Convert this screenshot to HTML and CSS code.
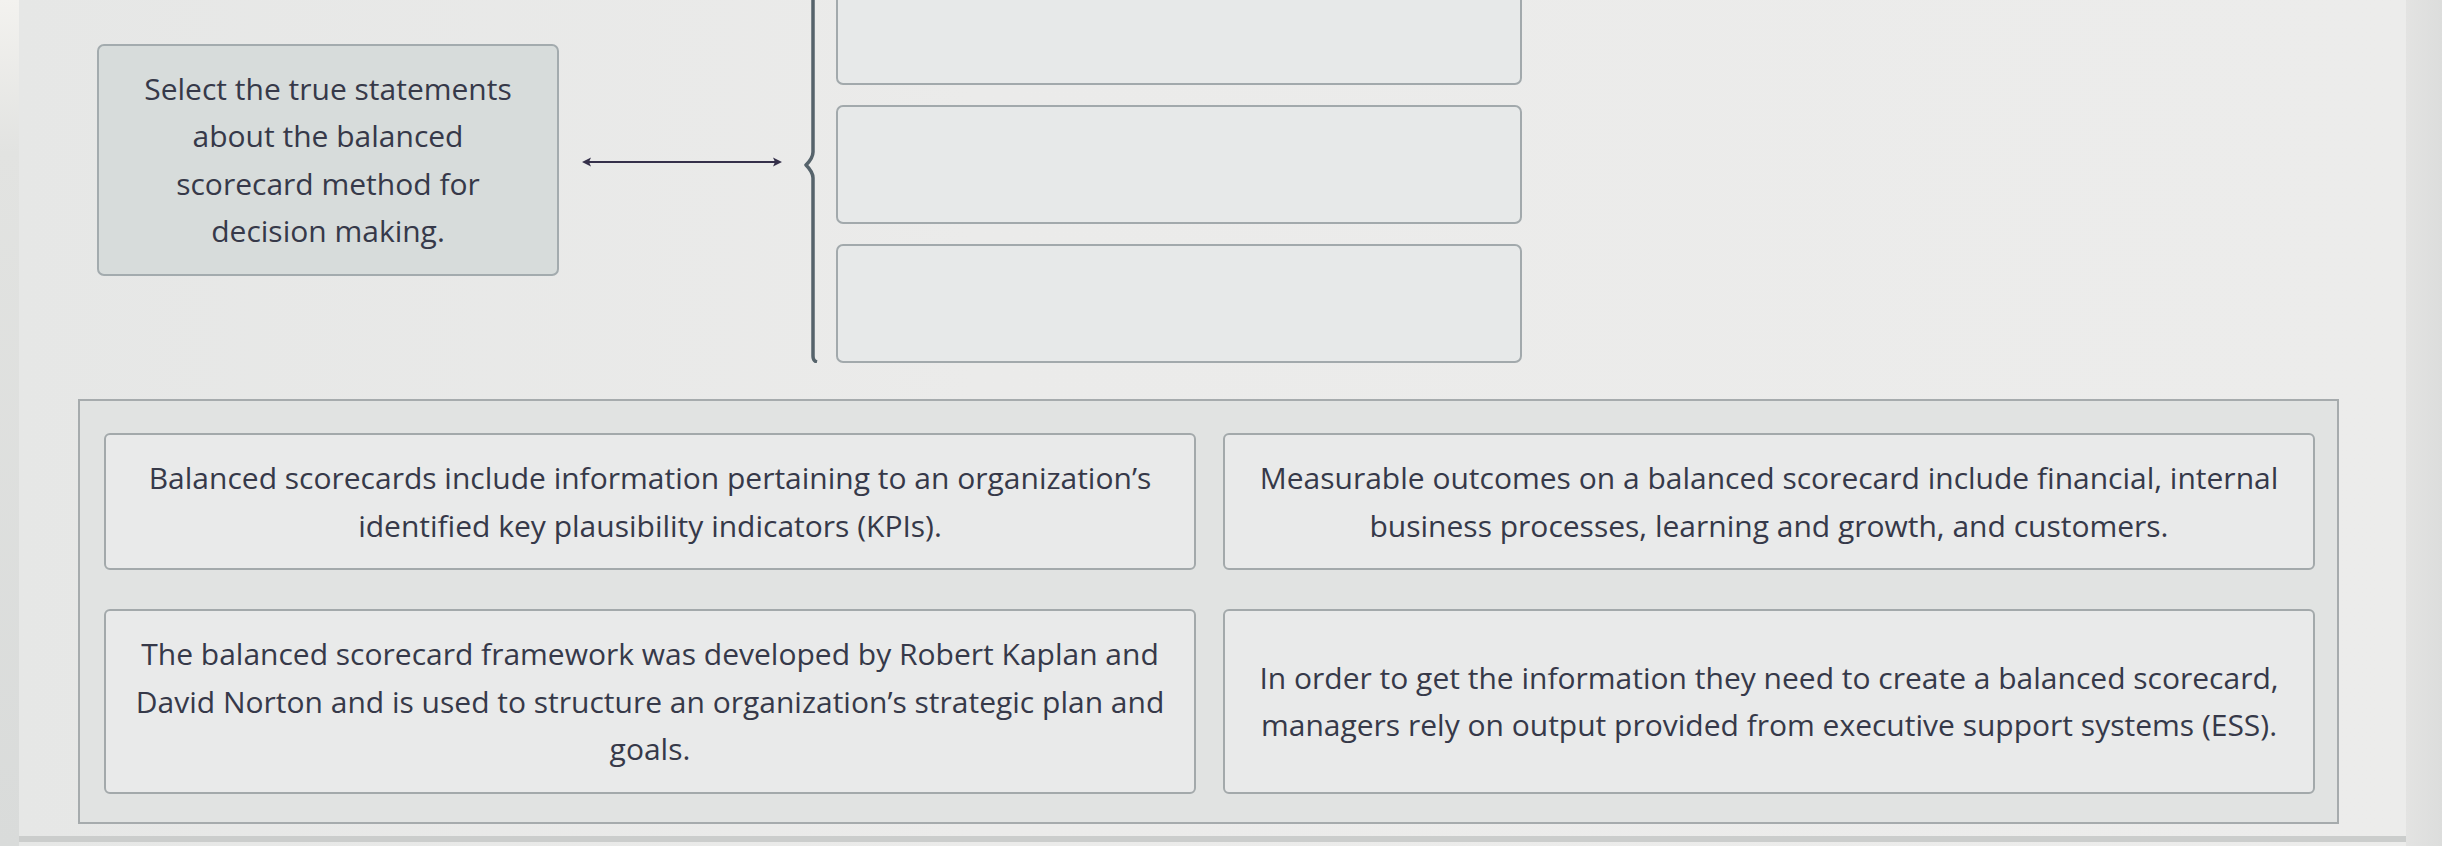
FILE: index.html
```html
<!DOCTYPE html>
<html lang="en">
<head>
<meta charset="utf-8">
<title>Balanced scorecard</title>
<link rel="stylesheet" href="styles.css">
</head>
<body>
<div class="screen">
  <div class="edge-left"></div>
  <main class="main">
    <section class="match-row">
      <div class="prompt">Select the true statements about the balanced scorecard method for decision making.</div>
      <svg class="arrow" viewBox="0 0 200 12" width="200" height="12" aria-hidden="true">
        <line x1="6" y1="6" x2="194" y2="6" stroke="#35304a" stroke-width="2.2"/>
        <path d="M0 6 L9 1.5 L7 6 L9 10.5 Z" fill="#35304a"/>
        <path d="M200 6 L191 1.5 L193 6 L191 10.5 Z" fill="#35304a"/>
      </svg>
      <svg class="brace" viewBox="0 0 16 397" preserveAspectRatio="none" aria-hidden="true">
        <path d="M11 0 V186 Q11 192 4 199 Q11 206 11 212 V390 Q11 395 15 396" fill="none" stroke="#56636b" stroke-width="3.5" stroke-linejoin="round"/>
      </svg>
      <div class="drops">
        <div class="drop"></div>
        <div class="drop"></div>
        <div class="drop"></div>
      </div>
    </section>
    <section class="bank">
      <div class="card">Balanced scorecards include information pertaining to an organization’s identified key plausibility indicators (KPIs).</div>
      <div class="card">Measurable outcomes on a balanced scorecard include financial, internal business processes, learning and growth, and customers.</div>
      <div class="card">The balanced scorecard framework was developed by Robert Kaplan and David Norton and is used to structure an organization’s strategic plan and goals.</div>
      <div class="card">In order to get the information they need to create a balanced scorecard, managers rely on output provided from executive support systems (ESS).</div>
    </section>
    <div class="bottom-line"></div>
  </main>
  <div class="edge-right"></div>
</div>
</body>
</html>
```

FILE: styles.css
```css
* { box-sizing: border-box; }

html, body {
  margin: 0;
  height: 100%;
  overflow: hidden;
}

body {
  background: #e9e9e8;
  font-family: "Open Sans", "Liberation Sans", sans-serif;
  color: #363949;
}

.screen {
  display: flex;
  height: 846px;
}

.edge-left {
  width: 19px;
  flex: none;
  background: linear-gradient(180deg, #f3f2ef 0%, #e2e3e1 18%, #d9dbda 100%);
}

.edge-right {
  width: 36px;
  flex: none;
  background: linear-gradient(90deg, #e3e3e2, #dcdddc);
}

.main {
  flex: 1;
  display: flex;
  flex-direction: column;
  background: linear-gradient(90deg, #e6e7e6 0%, #ebebea 40%, #ececeb 100%);
}

.match-row {
  display: flex;
  align-items: center;
  margin-top: -34px;
  padding-left: 78px;
}

.prompt {
  width: 462px;
  flex: none;
  padding: 19px 30px;
  margin-bottom: 10px;
  background: #d7dcdb;
  border: 2px solid #a3abae;
  border-radius: 7px;
  font-size: 30px;
  line-height: 47.5px;
  text-align: center;
}

.arrow {
  flex: none;
  margin-left: 23px;
  margin-bottom: 6px;
}

.brace {
  flex: none;
  width: 16px;
  align-self: stretch;
  margin-left: 20px;
}

.drops {
  width: 686px;
  flex: none;
  margin-left: 18px;
  display: flex;
  flex-direction: column;
  gap: 20px;
}

.drop {
  height: 119px;
  background: #e7e9e9;
  border: 2px solid #a2a9ac;
  border-radius: 7px;
}

.bank {
  margin: 36px 67px 0 59px;
  padding: 32px 22px 28px 24px;
  background: #e1e3e2;
  border: 2px solid #a6abad;
  display: grid;
  grid-template-columns: 1fr 1fr;
  gap: 39px 27px;
}

.card {
  display: flex;
  align-items: center;
  justify-content: center;
  padding: 19px 26px;
  background: #e9eaea;
  border: 2px solid #a3a9ab;
  border-radius: 6px;
  font-size: 30px;
  line-height: 47.5px;
  text-align: center;
}

.bottom-line {
  margin-top: 12px;
  height: 6px;
  background: #cbcdcc;
}
```
